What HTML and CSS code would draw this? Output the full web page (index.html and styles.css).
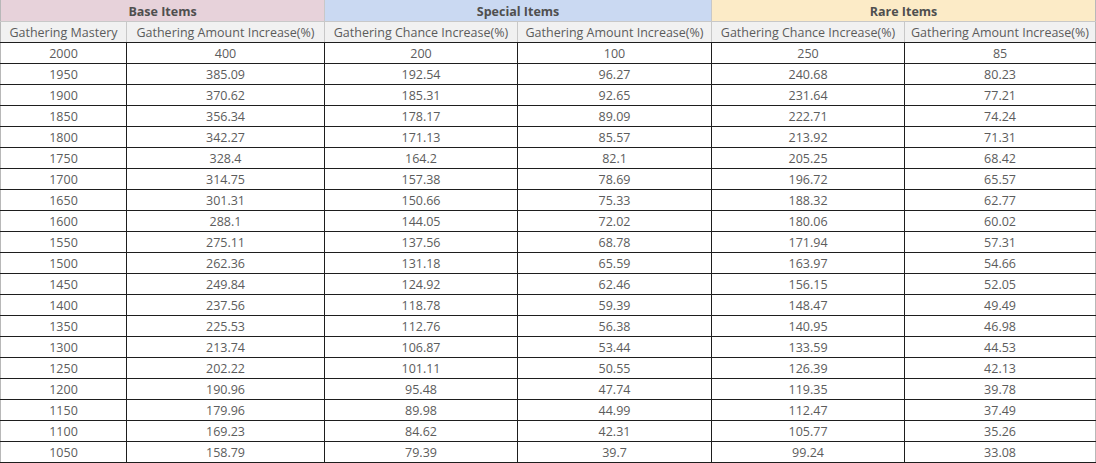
FILE: index.html
```html
<!DOCTYPE html>
<html>
<head>
<meta charset="utf-8">
<link rel="stylesheet" href="styles.css">
</head>
<body>
<table class="grid">
  <colgroup>
    <col class="c1"><col class="c2"><col class="c3"><col class="c4"><col class="c5"><col class="c6">
  </colgroup>
  <thead>
    <tr class="group">
      <th colspan="2" class="base">Base Items</th>
      <th colspan="2" class="special">Special Items</th>
      <th colspan="2" class="rare">Rare Items</th>
    </tr>
    <tr class="sub">
      <th>Gathering Mastery</th>
      <th>Gathering Amount Increase(%)</th>
      <th>Gathering Chance Increase(%)</th>
      <th>Gathering Amount Increase(%)</th>
      <th>Gathering Chance Increase(%)</th>
      <th>Gathering Amount Increase(%)</th>
    </tr>
  </thead>
  <tbody>
    <tr><td>2000</td><td>400</td><td>200</td><td>100</td><td>250</td><td>85</td></tr>
    <tr><td>1950</td><td>385.09</td><td>192.54</td><td>96.27</td><td>240.68</td><td>80.23</td></tr>
    <tr><td>1900</td><td>370.62</td><td>185.31</td><td>92.65</td><td>231.64</td><td>77.21</td></tr>
    <tr><td>1850</td><td>356.34</td><td>178.17</td><td>89.09</td><td>222.71</td><td>74.24</td></tr>
    <tr><td>1800</td><td>342.27</td><td>171.13</td><td>85.57</td><td>213.92</td><td>71.31</td></tr>
    <tr><td>1750</td><td>328.4</td><td>164.2</td><td>82.1</td><td>205.25</td><td>68.42</td></tr>
    <tr><td>1700</td><td>314.75</td><td>157.38</td><td>78.69</td><td>196.72</td><td>65.57</td></tr>
    <tr><td>1650</td><td>301.31</td><td>150.66</td><td>75.33</td><td>188.32</td><td>62.77</td></tr>
    <tr><td>1600</td><td>288.1</td><td>144.05</td><td>72.02</td><td>180.06</td><td>60.02</td></tr>
    <tr><td>1550</td><td>275.11</td><td>137.56</td><td>68.78</td><td>171.94</td><td>57.31</td></tr>
    <tr><td>1500</td><td>262.36</td><td>131.18</td><td>65.59</td><td>163.97</td><td>54.66</td></tr>
    <tr><td>1450</td><td>249.84</td><td>124.92</td><td>62.46</td><td>156.15</td><td>52.05</td></tr>
    <tr><td>1400</td><td>237.56</td><td>118.78</td><td>59.39</td><td>148.47</td><td>49.49</td></tr>
    <tr><td>1350</td><td>225.53</td><td>112.76</td><td>56.38</td><td>140.95</td><td>46.98</td></tr>
    <tr><td>1300</td><td>213.74</td><td>106.87</td><td>53.44</td><td>133.59</td><td>44.53</td></tr>
    <tr><td>1250</td><td>202.22</td><td>101.11</td><td>50.55</td><td>126.39</td><td>42.13</td></tr>
    <tr><td>1200</td><td>190.96</td><td>95.48</td><td>47.74</td><td>119.35</td><td>39.78</td></tr>
    <tr><td>1150</td><td>179.96</td><td>89.98</td><td>44.99</td><td>112.47</td><td>37.49</td></tr>
    <tr><td>1100</td><td>169.23</td><td>84.62</td><td>42.31</td><td>105.77</td><td>35.26</td></tr>
    <tr><td>1050</td><td>158.79</td><td>79.39</td><td>39.7</td><td>99.24</td><td>33.08</td></tr>
  </tbody>
</table>
</body>
</html>
```
FILE: styles.css
```css
html, body {
  margin: 0;
  padding: 0;
  background: #ffffff;
}
.grid {
  border-collapse: collapse;
  table-layout: fixed;
  width: 1095px;
  font-family: "Open Sans", "Noto Sans CJK KR", sans-serif;
  font-size: 12.5px;
  color: #5c5c5c;
}
.c1 { width: 126px; }
.c2 { width: 198px; }
.c3 { width: 193px; }
.c4 { width: 194px; }
.c5 { width: 193px; }
.c6 { width: 191px; }
.grid th,
.grid td {
  height: 18px;
  padding: 2px 0 0 0;
  line-height: 18px;
  text-align: center;
  white-space: nowrap;
  overflow: hidden;
}
.grid td {
  border: 1px solid #1e1e1e;
}
.grid th {
  border: 1px solid #c8c8c8;
  font-weight: normal;
}
.group th {
  height: 19px;
  line-height: 19px;
  font-weight: bold;
  color: #4f4f4f;
  border-top: none;
}
.base { background: #e7d2da; }
.special { background: #cad9f2; }
.rare { background: #fcebc7; }
.sub th {
  background: #f1f1f1;
  border-bottom-color: #1e1e1e;
}
.grid tr > :first-child { border-left-color: #b8b8b8; }
.grid tr > :last-child { border-right-color: #b8b8b8; }
```
